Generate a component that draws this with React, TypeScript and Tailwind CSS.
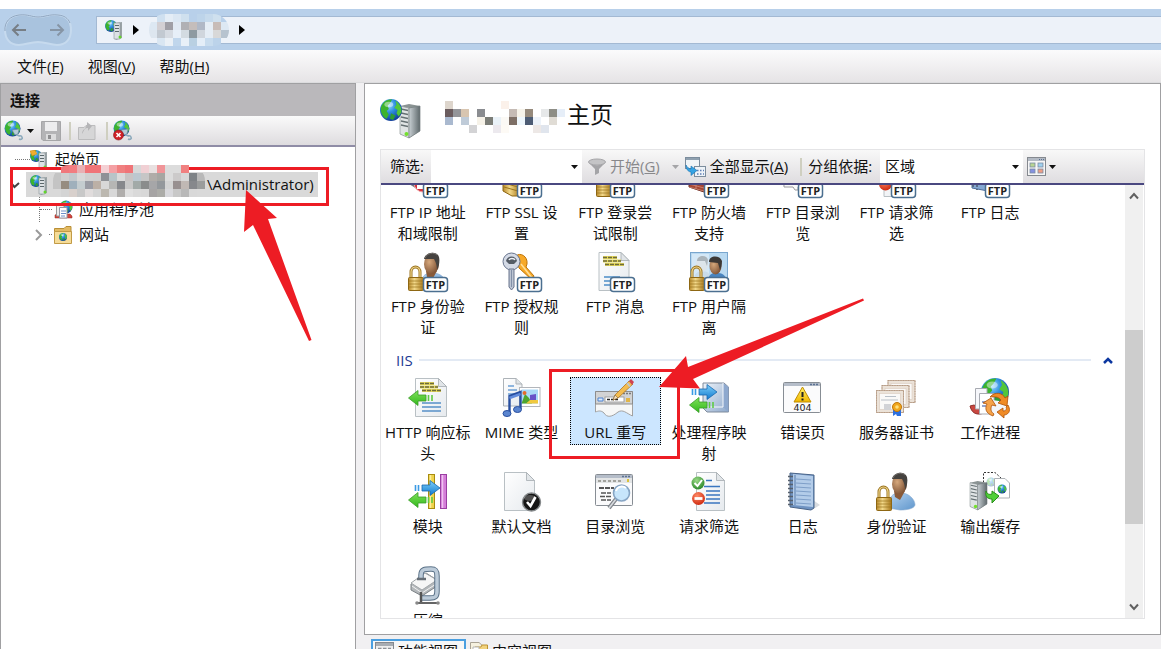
import { Fragment, type ReactNode } from "react";

// ---------- shared drawing parts ----------

function Defs() {
  return (
    <svg className="absolute h-0 w-0" aria-hidden="true">
      <defs>
        <radialGradient id="globe" cx="0.38" cy="0.28" r="0.8">
          <stop offset="0" stopColor="#9fe0ff" />
          <stop offset="0.4" stopColor="#2f8fe0" />
          <stop offset="1" stopColor="#0b2f8c" />
        </radialGradient>
        <linearGradient id="gold" x1="0" x2="1">
          <stop offset="0" stopColor="#b98a2b" />
          <stop offset="0.4" stopColor="#f3d98a" />
          <stop offset="1" stopColor="#a87719" />
        </linearGradient>
        <linearGradient id="paper" x1="0" x2="1" y1="0" y2="1">
          <stop offset="0" stopColor="#ffffff" />
          <stop offset="1" stopColor="#e6eaee" />
        </linearGradient>
        <linearGradient id="steel" x1="0" x2="1">
          <stop offset="0" stopColor="#c9d0d4" />
          <stop offset="1" stopColor="#5f696c" />
        </linearGradient>
        <linearGradient id="blueArrow" x1="0" x2="0" y1="0" y2="1">
          <stop offset="0" stopColor="#7fd0fa" />
          <stop offset="1" stopColor="#1079cf" />
        </linearGradient>
        <linearGradient id="greenArrow" x1="0" x2="0" y1="0" y2="1">
          <stop offset="0" stopColor="#7fe05a" />
          <stop offset="1" stopColor="#32b81c" />
        </linearGradient>
        <radialGradient id="skin" cx="0.35" cy="0.4" r="0.8">
          <stop offset="0" stopColor="#d6a77b" />
          <stop offset="1" stopColor="#6b4026" />
        </radialGradient>
        <linearGradient id="shirt" x1="0" x2="1" y1="0" y2="1">
          <stop offset="0" stopColor="#b5d3f0" />
          <stop offset="1" stopColor="#5f96cc" />
        </linearGradient>
        <linearGradient id="cube" x1="0" x2="1" y1="0" y2="1">
          <stop offset="0" stopColor="#eef3f9" />
          <stop offset="1" stopColor="#8ea9cc" />
        </linearGradient>
        <linearGradient id="warn" x1="0" x2="0" y1="0" y2="1">
          <stop offset="0" stopColor="#fff26b" />
          <stop offset="1" stopColor="#f2b800" />
        </linearGradient>
        <radialGradient id="redBall" cx="0.4" cy="0.3" r="0.8">
          <stop offset="0" stopColor="#ff8a66" />
          <stop offset="1" stopColor="#c81e06" />
        </radialGradient>
        <radialGradient id="greenBall" cx="0.4" cy="0.3" r="0.8">
          <stop offset="0" stopColor="#9ad986" />
          <stop offset="1" stopColor="#1f7f1f" />
        </radialGradient>
      </defs>
    </svg>
  );
}

function Globe({ x, y, r }: { x: number; y: number; r: number }) {
  return (
    <g transform={`translate(${x} ${y}) scale(${r / 10})`}>
      <circle r="10" fill="url(#globe)" />
      <path d="M-9 -3C-7 -8 -3 -10 1 -9.500L-1 -6L-3 -4L-2 -1L-4 1L-2 4L-4 8C-8 6 -10 1 -9 -3Z" fill="#3cb32e" />
      <path d="M4 -8.500C8 -6 10 -2 9.500 2L7 6L5 3L6 0L3 -2L5 -5Z" fill="#52c63a" />
      <path d="M0 3L4 5L2 9L-1 8Z" fill="#2f9c35" />
      <ellipse cx="-2" cy="-5" rx="4" ry="2.500" fill="#fff" opacity="0.45" />
    </g>
  );
}

function Page({ x = 7, w = 32, h = 38 }: { x?: number; w?: number; h?: number }) {
  return (
    <g transform={`translate(${x} 0.500)`}>
      <path d={`M0 0H${w - 8}L${w} 8V${h}H0Z`} fill="url(#paper)" stroke="#b9c0c4" />
      <path d={`M${w - 8} 0V8H${w}Z`} fill="#e1e5e8" stroke="#a4abb0" strokeWidth="0.800" />
    </g>
  );
}

function Lock({ x = 0, y = 14 }: { x?: number; y?: number }) {
  return (
    <g transform={`translate(${x} ${y})`}>
      <path d="M3 14V6A4.500 5 0 0 1 12 6V14" fill="none" stroke="#9b7420" strokeWidth="3" />
      <path d="M3 14V6A4.500 5 0 0 1 12 6V14" fill="none" stroke="#f0d68c" strokeWidth="1.200" />
      <rect x="0.500" y="11.500" width="15" height="13" rx="1" fill="url(#gold)" stroke="#8e6713" />
      <path d="M1 15H15M1 18H15M1 21H15" stroke="#9a731d" strokeWidth="0.700" />
    </g>
  );
}

function Person() {
  return (
    <g>
      <path d="M13 36C12 25 17 21 23 21C32 20 39 27 39 33C38 37 30 38 24 38Z" fill="url(#shirt)" stroke="#7fa5cc" strokeWidth="0.600" />
      <path d="M18 19L19 25L24 28L29 19Z" fill="#8a5a38" />
      <ellipse cx="23.500" cy="12" rx="7.500" ry="10" fill="url(#skin)" />
      <path d="M16 7C17 0 29 -2 31 5C32 9 31 14 29 18C29 12 27 9 26 7Z" fill="#45423f" />
      <path d="M17 6C19 1 26 0 29 3" stroke="#77736f" fill="none" />
    </g>
  );
}

function Ftp() {
  return (
    <g>
      <rect x="15.500" y="25.500" width="24" height="14" rx="3" fill="#fff" stroke="#4b6f90" strokeWidth="1.500" />
      <text x="27.500" y="36.500" textAnchor="middle" fontSize="11" fontWeight="700" fontFamily="'Open Sans', sans-serif" fill="#222">
        FTP
      </text>
    </g>
  );
}

function RightArrow({ x, y }: { x: number; y: number }) {
  return (
    <g transform={`translate(${x} ${y})`} fill="url(#blueArrow)" stroke="#1668b0" strokeWidth="0.800">
      <path d="M7 5H15V0.500L25 8L15 15.500V11H7Z" />
      <path d="M0.500 5V11M3.500 5V11" strokeWidth="1.600" stroke="#3a9ae4" />
    </g>
  );
}

function LeftArrow({ x, y }: { x: number; y: number }) {
  return (
    <g transform={`translate(${x} ${y})`} fill="url(#greenArrow)" stroke="#3a9c28" strokeWidth="0.800">
      <path d="M18 5H10V0.500L0.500 8L10 15.500V11H18Z" />
      <path d="M20.500 5V11M24 5V11" strokeWidth="1.600" stroke="#5fcb45" />
    </g>
  );
}

function Tower({ x, y, s = 1 }: { x: number; y: number; s?: number }) {
  return (
    <g transform={`translate(${x} ${y}) scale(${s})`}>
      <path d="M0 2L9 0L20 2V27L9 34L0 30Z" fill="#8a9393" />
      <path d="M0 2L9 4V34L0 30Z" fill="#dfe3e4" stroke="#90989a" strokeWidth="0.700" />
      <path d="M9 4L20 2V27L9 34Z" fill="url(#steel)" stroke="#737c7e" strokeWidth="0.700" />
      <path d="M1 5L8 6.500M1 9L8 10.500M1 13L8 14.500M1 17L8 18.500M1 21L8 22.500" stroke="#657073" strokeWidth="1.300" />
      <circle cx="6.500" cy="30" r="2" fill="#73e02c" />
    </g>
  );
}

function YellowLines({ x = 11 }: { x?: number }) {
  return (
    <g>
      <path d={`M${x} 5.500H${x + 14}M${x} 9H${x + 18}M${x + 2} 12.500H${x + 21}`} stroke="#e6d95b" strokeWidth="2.800" />
      <path d={`M${x} 5.500H${x + 14}M${x} 9H${x + 18}M${x + 2} 12.500H${x + 21}`} stroke="#6d6b3c" strokeWidth="1.300" strokeDasharray="4 1" />
    </g>
  );
}

function WindowFrame({ y, h }: { y: number; h: number }) {
  return (
    <g>
      <rect x="0.500" y={y + 0.5} width="37" height={h} rx="1" fill="#fbfbfc" stroke="#878d94" />
      <rect x="1" y={y + 1} width="36" height="3" fill="#b5bdc9" />
      <path d={`M27 ${y + 2.5}H35`} stroke="#5d7395" strokeWidth="1.500" strokeDasharray="2 1" />
    </g>
  );
}

// ---------- feature icons, 40 x 40 ----------

const ICONS: Record<string, ReactNode> = {
  ftpIp: (
    <>
      <path d="M1 26L8 22L16 25V31L9 31Z" fill="#70777c" />
      <circle cx="15" cy="25" r="9" fill="#d8323c" stroke="#f0a0a4" />
      <rect x="9" y="27" width="12" height="4" fill="#fff" />
      <Ftp />
    </>
  ),
  ftpSsl: (
    <>
      <path d="M1 16H18V38L10 38L1 33Z" fill="url(#gold)" stroke="#8e6713" />
      <path d="M2 25L16 29M2 29L16 33" stroke="#9a731d" />
      <Ftp />
    </>
  ),
  ftpLogin: (
    <>
      <Lock x={1} y={14} />
      <Ftp />
    </>
  ),
  ftpFirewall: (
    <>
      <path d="M0 20L28 16V36L15 34L0 29Z" fill="#a64634" stroke="#6e2b20" />
      <path d="M0 26L15 30M7 21V31M0 29L15 33" stroke="#d99784" strokeWidth="0.700" />
      <Ftp />
    </>
  ),
  ftpBrowse: (
    <>
      <path d="M0.500 8H36V29H15V32H12L10 29H1Z" fill="#fafafa" stroke="#9a9a9e" />
      <Ftp />
    </>
  ),
  ftpFilter: (
    <>
      <Page x={8} w={28} />
      <circle cx="9.500" cy="26" r="6.500" fill="url(#redBall)" />
      <Ftp />
    </>
  ),
  ftpLog: (
    <>
      <path d="M2 2H27V35L18 33L2 30Z" fill="#85a8d2" stroke="#4f6e9b" />
      <path d="M3 3V30M7 3V32" stroke="#5b6c85" strokeDasharray="2 2" strokeWidth="2" />
      <Ftp />
    </>
  ),
  ftpAuth: (
    <>
      <Person />
      <Lock />
      <Ftp />
    </>
  ),
  ftpRules: (
    <>
      <path d="M14 4C18 0 26 4 25 12L24 15L32 24L30 28L17 16Z" fill="#f7a928" stroke="#bd7307" />
      <path d="M19 12L30 26" stroke="#ffe09a" strokeWidth="1.500" />
      <circle cx="9.500" cy="9.500" r="8.500" fill="#d4dae6" stroke="#68748d" />
      <path d="M7 17H12V35L9.500 38L7 35Z" fill="#bcc5d3" stroke="#68748d" />
      <path d="M9.500 18V35" stroke="#8290a8" />
      <path d="M4 9C5 3 14 3 15 9L12 12H7Z" fill="#545c66" />
      <path d="M7 8C8 6 12 6 13 8" stroke="#eef2f7" fill="none" strokeWidth="1.500" />
      <Ftp />
    </>
  ),
  ftpMessage: (
    <>
      <Page x={4} w={30} />
      <YellowLines x={8} />
      <path d="M9 25H25M9 29H16M9 33H16" stroke="#4c8dc8" strokeWidth="1.500" />
      <Ftp />
    </>
  ),
  ftpIsolation: (
    <>
      <rect x="1.500" y="0.500" width="37" height="34" fill="#b9d9f1" stroke="#79a6ce" />
      <rect x="3" y="2" width="17" height="30" fill="#d4e8f7" />
      <path d="M5 28C5 21 9 19 14 19C19 19 22 23 22 28Z" fill="#c9dcea" />
      <ellipse cx="13" cy="12" rx="6" ry="8" fill="#dde5ea" />
      <path d="M8 9C8 3 18 2 19 8L18 14L16 9Z" fill="#aab4bb" />
      <path d="M19 30C19 22 24 20 29 21C35 21 38 25 38 32Z" fill="#4a85c0" />
      <ellipse cx="26.500" cy="14" rx="6" ry="8.500" fill="url(#skin)" />
      <path d="M20 10C20 3 31 3 33 9C33 13 32 16 31 18L29 11Z" fill="#3d3835" />
      <Lock />
      <Ftp />
    </>
  ),
  httpHeaders: (
    <>
      <Page x={7.5} w={31} />
      <YellowLines x={12} />
      <path d="M14 25H33M14 29H33M14 33H33" stroke="#5790c8" strokeWidth="1.600" />
      <LeftArrow x={0} y={12} />
    </>
  ),
  mime: (
    <>
      <path d="M1.500 0.500H14L20 6V28H1.500Z" fill="url(#paper)" stroke="#adb3b8" />
      <path d="M14 0.500V6H20" fill="#dfe3e6" stroke="#adb3b8" />
      <path d="M6 8H12M6 12H15M6 16H14" stroke="#6da0d5" strokeWidth="1.500" />
      <rect x="17.500" y="9.500" width="20.500" height="19" fill="#fff" stroke="#b3b6bb" />
      <rect x="19.500" y="11.500" width="16.500" height="14" fill="#a9d8f7" />
      <path d="M19.500 25.500L23 16L27 20L30 25.500Z" fill="#4fa52e" />
      <path d="M28 17L34 16V22L28 23Z" fill="#6852c7" />
      <circle cx="22.500" cy="15" r="2" fill="#e66c2b" />
      <path d="M24 25.500L28 22H36V25.500Z" fill="#f1c93f" />
      <path d="M7.500 35V18L18.500 14V31" fill="none" stroke="#274e9f" strokeWidth="2.400" />
      <path d="M7.500 20L18.500 16" stroke="#638cdb" strokeWidth="2.500" />
      <ellipse cx="5" cy="35.500" rx="4" ry="3" fill="#5b85cf" stroke="#274e9f" />
      <ellipse cx="15.500" cy="31.500" rx="4" ry="3" fill="#5b85cf" stroke="#274e9f" />
    </>
  ),
  urlRewrite: (
    <>
      <path d="M0.500 13.500H37.500V38C31 35 28 31 23 34C17 39 12 40 9 35C6 32 3 33 0.500 34Z" fill="#f6f7f7" stroke="#a2a2a2" />
      <path d="M0.500 13.500H37.500V26H0.500Z" fill="#d2d3d4" stroke="#8d8d8d" />
      <path d="M28 15.500H36" stroke="#797979" strokeDasharray="2 1" strokeWidth="1.500" />
      <rect x="10" y="19" width="19" height="5" fill="#fff" stroke="#909090" strokeWidth="0.800" />
      <path d="M12 21.500H24" stroke="#222" strokeWidth="1.600" strokeDasharray="3 1" />
      <path d="M3 20H8V23H3Z" fill="#dcecff" stroke="#4f83cf" />
      <path d="M31 20H35V24H31Z" fill="#e1b548" />
      <path d="M18 22L20 17L34 3L38 6L23 20Z" fill="#f3bc4f" stroke="#a96d17" strokeWidth="0.700" />
      <path d="M18 22L20 17L23 20Z" fill="#f4dfbe" stroke="#6f5229" strokeWidth="0.500" />
      <path d="M34 3L36 1L39 4L37 7Z" fill="#cf4353" />
      <path d="M32 5L35 8.500" stroke="#bec8d0" strokeWidth="1.800" />
    </>
  ),
  handlers: (
    <>
      <path d="M14 5H35L39.500 9V34H18L14 30Z" fill="url(#cube)" stroke="#7f8b9c" />
      <path d="M34 5L39.500 9V34L34 29Z" fill="#8da8ce" />
      <path d="M14 29H34V5" fill="none" stroke="#f5f8fd" />
      <RightArrow x={3} y={6} />
      <LeftArrow x={0} y={19} />
    </>
  ),
  error404: (
    <>
      <WindowFrame y={4} h={30} />
      <path d="M19.500 9L28 24H11Z" fill="url(#warn)" stroke="#c08c00" strokeLinejoin="round" />
      <path d="M19.500 14V19M19.500 20.500V22.500" stroke="#222" strokeWidth="2" />
      <text x="19.500" y="33" fontSize="9.500" textAnchor="middle" fontFamily="'DejaVu Sans', sans-serif" fill="#222">
        404
      </text>
    </>
  ),
  certs: (
    <>
      {[
        [12, 2.5],
        [6, 7.5],
        [0.5, 12.5],
      ].map(([x, y]) => (
        <g key={x}>
          <rect x={x} y={y} width="27" height="22" fill="#ebe2d8" stroke="#c5ad99" />
          <rect x={x} y={y} width="27" height="22" fill="none" stroke="#b39b87" strokeDasharray="1 1.500" />
          <rect x={x + 3} y={y + 3} width="21" height="16" fill="#faf9f8" stroke="#d9cabd" strokeWidth="0.600" />
        </g>
      ))}
      <path d="M9 18.500H20M5 22H22" stroke="#b9c0c8" />
      <rect x="8" y="26" width="7" height="6" fill="#d2d3d7" />
      <path d="M17 31V38L20 36L21 38L25 38V31Z" fill="#2c70e0" />
      <circle cx="21" cy="29" r="4.500" fill="#f0a61d" stroke="#c17609" />
      <circle cx="21" cy="29" r="1.800" fill="#ffe07d" />
    </>
  ),
  worker: (
    <>
      <Globe x={25} y={14} r={14} />
      <path d="M0 28C2 37 9 37 14 35L10 30L4 27Z" fill="#c94740" stroke="#8f302b" />
      <path d="M5.500 10.500H17V31H5.500Z" fill="#f6f7fb" stroke="#a7aab1" />
      <path d="M9.500 15.500H24V36H9.500Z" fill="#fff" stroke="#a7aab1" />
      <path d="M22 22L36 24L35 36H20Z" fill="#f4f6fa" />
      <path d="M12 24H19M12 28H16" stroke="#7286bd" strokeWidth="1.500" />
      <path d="M20 19C25 13 33 15 35 20L38 18L37 28L28 25L31 22C28 18 24 19 20 19Z" fill="#f08b26" stroke="#ad5107" strokeWidth="0.800" />
      <path d="M38 27C42 34 37 37 34 37V40L27 34L33 30V33C36 33 37 31 36 29Z" fill="#f08b26" stroke="#ad5107" strokeWidth="0.800" />
      <path d="M23 38C15 35 15 30 17 26L13 25L21 20L26 28L22 27C20 31 21 34 24 36Z" fill="#f5a34a" stroke="#ad5107" strokeWidth="0.800" />
    </>
  ),
  modules: (
    <>
      <rect x="20.500" y="2.500" width="6" height="34" fill="#efd24a" stroke="#a88c10" />
      <rect x="32.500" y="2.500" width="6" height="34" fill="#d47ed8" stroke="#9a3fa2" />
      <path d="M34.500 3V36" stroke="#f0c3f2" strokeWidth="1.500" />
      <path d="M22.500 3V36" stroke="#fbec9b" strokeWidth="1.500" />
      <RightArrow x={7} y={8} />
      <LeftArrow x={0} y={20} />
    </>
  ),
  defaultDoc: (
    <>
      <Page x={2.5} w={30} />
      <circle cx="29.500" cy="30" r="9" fill="#151515" stroke="#85898b" strokeWidth="1.400" />
      <ellipse cx="28" cy="26" rx="6" ry="3" fill="#fff" opacity="0.250" />
      <path d="M25 30L28.500 34L33.500 25" fill="none" stroke="#fff" strokeWidth="2.600" />
    </>
  ),
  dirBrowse: (
    <>
      <WindowFrame y={2} h={31} />
      <rect x="1" y="6" width="36" height="5" fill="#e3e5e6" />
      <path d="M3 9H26" stroke="#a2a29d" strokeWidth="2" strokeDasharray="3 2" />
      <path d="M33 7V10" stroke="#d9c33a" strokeWidth="2" />
      <path d="M4 16H19" stroke="#222" strokeWidth="1.500" strokeDasharray="5 1" />
      <path d="M6 21H16M5 24.500H16M6 28H16" stroke="#555" strokeWidth="1.500" strokeDasharray="5 1" />
      <path d="M21 27L14 36" stroke="#80858b" strokeWidth="4" />
      <path d="M21 27L14 36" stroke="#d8dce0" strokeWidth="1.500" />
      <circle cx="26.500" cy="21" r="8" fill="#c7e5fb" stroke="#87a5c4" strokeWidth="1.600" />
      <path d="M21 19C22 15 27 13 31 16" stroke="#fff" strokeWidth="2" fill="none" />
    </>
  ),
  requestFilter: (
    <>
      <Page x={7.5} w={28} />
      <path d="M17 8.500H23M15 14.500H31M17 19H31M17 23H31M17 27H31M15 31H31" stroke="#3a76c0" strokeWidth="1.500" />
      <circle cx="9" cy="11" r="6.500" fill="url(#greenBall)" />
      <path d="M5.500 11L8.500 14L13 8" fill="none" stroke="#fff" strokeWidth="2" />
      <circle cx="9.500" cy="26.500" r="6.500" fill="url(#redBall)" />
      <path d="M5.500 26.500H13.500" stroke="#fff" strokeWidth="2.800" />
    </>
  ),
  log: (
    <>
      <path d="M30 28L37 33L29 38Z" fill="#d9dce0" />
      <path d="M7 1L31 3V36L28 38L7 35Z" fill="#6f93c2" stroke="#496489" />
      <path d="M10 2L30 4V35L10 33Z" fill="#b3cce9" />
      <path d="M13 7L28 8M13 11L28 12M13 15L28 16M13 19L28 20M13 23L28 24M13 27L28 28M13 31L28 32" stroke="#7e9fc8" />
      <path d="M12 3V33" stroke="#587dab" />
      <path d="M5 4.500H10M5 8.500H10M5 12.500H10M5 16.500H10M5 20.500H10M5 24.500H10M5 28.500H10M5 32.500H10" stroke="#57616d" strokeWidth="1.500" />
    </>
  ),
  auth: (
    <>
      <Person />
      <Lock x={0} y={14} />
    </>
  ),
  outputCache: (
    <>
      <path d="M13.500 28V0.500H25L31 6V10" fill="#fff" stroke="#333" strokeDasharray="2 1.500" />
      <g opacity="0.350">
        <Globe x={21} y={10} r={4.500} />
      </g>
      <Tower x={0} y={9} s={0.85} />
      <path d="M24.500 6.500H35L39.500 11V26H24.500Z" fill="#fff" stroke="#adb1b5" />
      <Globe x={32} y={17} r={4.500} />
      <path d="M16 19C17 22 19 23 22 22V19L29 24L22 31V27C17 27 15 24 16 19Z" fill="#4fcf38" stroke="#2a8e1b" />
    </>
  ),
  compress: (
    <>
      <path d="M3 18L18 7L29 14V20L14 30L3 24Z" fill="#b4b8bb" stroke="#7c8286" />
      <path d="M3 17L17 7L29 14L14 24Z" fill="#f6f6f6" stroke="#a1a6a9" />
      <path d="M4 20L14 27L28 18" fill="none" stroke="#f2f2f2" />
      <path d="M13 13V9C13 3 17 3 23 3C28 3 29 5 29 10V25C29 31 27 32 22 32H13" fill="none" stroke="#5b7288" strokeWidth="5.500" />
      <path d="M13 13V9C13 3 17 3 23 3C28 3 29 5 29 10V25C29 31 27 32 22 32H13" fill="none" stroke="#bccbd9" strokeWidth="3.500" />
      <path d="M9 13H18" stroke="#666e76" strokeWidth="2.500" />
      <path d="M13 26V38" stroke="#555" strokeWidth="2.500" />
      <path d="M9 37H30" stroke="#656565" strokeWidth="2" />
      <circle cx="9" cy="37" r="1.800" fill="#888" />
      <circle cx="30" cy="37" r="1.800" fill="#888" />
    </>
  ),
};

type Feature = { icon: string; label: string; selected?: boolean };

const FTP_FEATURES: Feature[] = [
  { icon: "ftpIp", label: "FTP IP 地址\n和域限制" },
  { icon: "ftpSsl", label: "FTP SSL 设\n置" },
  { icon: "ftpLogin", label: "FTP 登录尝\n试限制" },
  { icon: "ftpFirewall", label: "FTP 防火墙\n支持" },
  { icon: "ftpBrowse", label: "FTP 目录浏\n览" },
  { icon: "ftpFilter", label: "FTP 请求筛\n选" },
  { icon: "ftpLog", label: "FTP 日志" },
  { icon: "ftpAuth", label: "FTP 身份验\n证" },
  { icon: "ftpRules", label: "FTP 授权规\n则" },
  { icon: "ftpMessage", label: "FTP 消息" },
  { icon: "ftpIsolation", label: "FTP 用户隔\n离" },
];

const IIS_FEATURES: Feature[] = [
  { icon: "httpHeaders", label: "HTTP 响应标\n头" },
  { icon: "mime", label: "MIME 类型" },
  { icon: "urlRewrite", label: "URL 重写", selected: true },
  { icon: "handlers", label: "处理程序映\n射" },
  { icon: "error404", label: "错误页" },
  { icon: "certs", label: "服务器证书" },
  { icon: "worker", label: "工作进程" },
  { icon: "modules", label: "模块" },
  { icon: "defaultDoc", label: "默认文档" },
  { icon: "dirBrowse", label: "目录浏览" },
  { icon: "requestFilter", label: "请求筛选" },
  { icon: "log", label: "日志" },
  { icon: "auth", label: "身份验证" },
  { icon: "outputCache", label: "输出缓存" },
  { icon: "compress", label: "压缩" },
];

function FeatureGrid({ items }: { items: Feature[] }) {
  return (
    <div className="grid w-[656px] auto-rows-[94px] grid-cols-7 justify-items-center">
      {items.map((f) => (
        <div key={f.label} className="pt-[3px]">
          <button
            type="button"
            className={
              f.selected
                ? "flex w-[91px] flex-col items-center gap-1 border border-dotted border-black bg-[#cce6ff] pb-px"
                : "flex w-[91px] flex-col items-center gap-1 border border-transparent pb-px"
            }
          >
            <svg viewBox="0 0 40 40" className="h-10 w-10 overflow-visible" aria-hidden="true">
              {ICONS[f.icon]}
            </svg>
            <span className="whitespace-pre leading-[21px]">{f.label}</span>
          </button>
        </div>
      ))}
    </div>
  );
}

// ---------- pixelated name patches ----------

const ADDRESS_ROWS = [
  "- cfe0f0 e4edf6 dbe7f3 cfe0ee b8d0ea bdd4ea c6daec cfe0ee b8d0ea -",
  "dde8f3 d3d0d4 a09fa6 e1e9f3 b0b0b4 c4bdbb b0b8c6 e5edf5 c8bcb7 dde8f3",
  "dde6ef c2c9d1 d6dbe2 e7eff8 d3dbe1 8e9aa1 d0d6dd e5edf5 d8d8d8 b7c3cf",
  "- d9e6f2 eaf0f6 c0d6ec e8f0f8 b9d0e2 e4eef8 c8dcee bcd3ea -",
];

const ACCOUNT_ROWS = [
  "- f0787c f27c80 e8b0b4 f07478 f07478 f4d0d4 f4a0a4 f08080 f07478 d8d8d8 f0d0d4 e8e0e0 f09498 dcdcdc dcdcdc f08080 - -",
  "c4c4c4 cfcfcf c3c8cc d8d8d8 d0d0d0 cfcfcf 8e9196 b8c4c8 dadada c8c4c4 bcc8d0 c6c6c6 b0aca8 a6a6a2 dcdcdc cccaca d8d8d8 7e8286 b8b8b8",
  "c4c4c4 968c80 a0b0bc c4cccf 9a9ca4 bcb0a6 d8d8d8 b6b6b4 86888c c8c8c8 a2aaa8 8a8c8c a6a6a8 94989c d4d4d4 989090 c0b8b4 86888c 9a9c9c",
  "- d4d4d4 d8d0cc c8c8c8 e0dcdc d4d4d4 bcb8b0 d8d8d8 b0aeac e0e0e0 dadada d8d8d8 a6a4a4 acaca8 d8d8dc c8c8c8 b8b8b8 d8d8d8 -",
  "-",
];

const TITLE_ROWS = [
  "ddd5cc - - - - - - fbf1ea",
  "6b5c5e 949599 d8c5b0 - 8a8c90 - - - c5bbb5 f6f3ea 968a7c - e6e8e9 8e8e86 e6eef8",
  "aab9cf - bfcbd8 - f6f2e8 7b7d77 eaf2f8 fbf9f5 7d6f66 eef7fd 4d5c74 edf3fa - e0dcd5",
  "- - - d3d3d5 - - ece9ee fdfaf5 - - - ede8e6 e0e5ed",
];

function Mosaic({ rows, cols, className }: { rows: string[]; cols: number; className: string }) {
  return (
    <svg width={cols * 8} height={rows.length * 8} className={className} shapeRendering="crispEdges" aria-hidden="true">
      {rows.map((row, r) => (
        <Fragment key={r}>
          {row.split(" ").map((c, i) =>
            c === "-" ? null : <rect key={i} x={i * 8} y={r * 8} width="8" height="8" fill={`#${c}`} />,
          )}
        </Fragment>
      ))}
    </svg>
  );
}

// ---------- small glyphs ----------

function Caret({ className = "" }: { className?: string }) {
  return (
    <svg viewBox="0 0 7 4" className={`h-1 w-[7px] shrink-0 ${className}`} aria-hidden="true">
      <path d="M0 0H7L3.500 4Z" fill="currentColor" />
    </svg>
  );
}

function CrumbArrow() {
  return (
    <svg viewBox="0 0 6 10" className="h-[10px] w-[6px] shrink-0" aria-hidden="true">
      <path d="M0 0L6 5L0 10Z" fill="#000" />
    </svg>
  );
}

function ServerIcon({ home = false }: { home?: boolean }) {
  return (
    <svg viewBox="0 0 18 20" className="h-5 w-[18px] shrink-0" aria-hidden="true">
      <Globe x={6} y={6} r={6} />
      {home && <path d="M0 1L5 0L7 4L2 6Z" fill="#efae2e" stroke="#c27c10" strokeWidth="0.500" />}
      <path d="M9 3L17 2V18L11 20L9 18Z" fill="#9aa3a6" />
      <path d="M9 3H15V19H9Z" fill="#dde2e5" stroke="#8c9598" strokeWidth="0.600" />
      <path d="M10 5.500H14M10 8.500H14M10 11.500H14" stroke="#5b686c" />
      <circle cx="15" cy="17" r="1.500" fill="#62d62a" />
    </svg>
  );
}

function PlugGlobe({ removed = false }: { removed?: boolean }) {
  return (
    <svg viewBox="0 0 21 21" className="h-[21px] w-[21px] shrink-0" aria-hidden="true">
      <Globe x={8.5} y={8.5} r={8} />
      <path d="M8 10L15 9L14 14L11 15Z" fill="#b5cbd8" stroke="#6c8ba1" strokeWidth="0.700" />
      <path d="M13 14C14 18 17 14 18 17C19 19 17 20 15 19" fill="none" stroke="#8ba9bb" strokeWidth="1.600" />
      {removed && (
        <>
          <circle cx="5.500" cy="15" r="5" fill="#cf2027" stroke="#8b171c" strokeWidth="0.600" />
          <path d="M3.500 13L7.500 17M7.500 13L3.500 17" stroke="#fff" strokeWidth="1.600" />
        </>
      )}
    </svg>
  );
}

function Separator() {
  return <span className="h-[18px] w-0.5 shrink-0 bg-[#cfcfc0]" />;
}

function NavButtons() {
  return (
    <div className="relative flex h-8 w-[68px] shrink-0 items-center justify-between px-[7px]">
      <svg viewBox="0 0 68 32" className="absolute inset-0 h-8 w-[68px]" aria-hidden="true">
        <path
          d="M15 1C24 0 28 3 34 3C41 3 45 0 54 1C64 2 67 9 67 16C67 25 62 31 53 31C46 31 42 28 34 28C26 28 22 31 15 31C6 31 1 25 1 16C1 8 6 2 15 1Z"
          fill="#a9c3de"
          stroke="#c6daee"
          strokeWidth="2"
        />
        <path d="M1 17C0 8 6 2 15 1C24 0 28 3 34 3C41 3 45 0 54 1C60 1.500 64 4 66 9" fill="none" stroke="#8ea5c0" />
      </svg>
      <button type="button" aria-label="后退" className="relative">
        <svg viewBox="0 0 16 14" className="h-[14px] w-4" fill="none" stroke="#777e85" strokeWidth="2">
          <path d="M15 7H2M7.500 1.500L2 7L7.500 12.500" />
        </svg>
      </button>
      <button type="button" aria-label="前进" className="relative">
        <svg viewBox="0 0 16 14" className="h-[14px] w-4" fill="none" stroke="#8695a5" strokeWidth="2">
          <path d="M1 7H14M8.500 1.500L14 7L8.500 12.500" />
        </svg>
      </button>
    </div>
  );
}

const MENUS = [
  ["文件", "F"],
  ["视图", "V"],
  ["帮助", "H"],
];

function Connections() {
  return (
    <aside className="flex w-[356px] shrink-0 flex-col border border-b-0 border-[#a0a0a2] bg-white">
      <h2 className="flex h-8 shrink-0 items-center bg-[#bab8bb] px-[9px] font-bold">连接</h2>
      <div className="flex h-[31px] shrink-0 items-center border-b-2 border-[#8f8ca6] bg-linear-to-b from-[#fafafa] to-[#dedcdf] pl-[3px]">
        <button type="button" aria-label="连接到服务器" className="flex items-center gap-0.5">
          <PlugGlobe />
          <Caret />
        </button>
        <button type="button" aria-label="保存连接" disabled className="ml-[7px]">
          <svg viewBox="0 0 20 20" className="h-5 w-5">
            <path d="M0.500 0.500H19.500V19.500H2L0.500 18Z" fill="#b4b4b6" stroke="#a6a6a8" />
            <rect x="4" y="1" width="12" height="9" fill="#ededee" />
            <rect x="5" y="13" width="10" height="6" fill="#dcdcdd" />
            <rect x="7" y="14" width="3" height="4" fill="#8f8f91" />
          </svg>
        </button>
        <span className="ml-2 flex items-center gap-[7px]">
          <Separator />
          <button type="button" aria-label="上移" disabled>
            <svg viewBox="0 0 18 18" className="h-[18px] w-[18px]">
              <path d="M0.500 5.500H6L8 3.500H17V17.500H0.500Z" fill="#d6d6d7" stroke="#bcbcbd" />
              <path d="M4 12C4 8 7 6 10 6V9L14 4L9 0V3" fill="#b5b5b7" />
            </svg>
          </button>
        </span>
        <span className="ml-[10px] flex items-center gap-[5px]">
          <Separator />
          <button type="button" aria-label="删除连接">
            <PlugGlobe removed />
          </button>
        </span>
      </div>

      <ul className="flex flex-col">
        <li className="flex h-[25px] items-center pl-[14px]">
          <span className="h-px w-[15px] border-t border-dotted border-[#777]" />
          <button type="button" className="flex items-center gap-[7px]">
            <ServerIcon home />
            起始页
          </button>
        </li>
        <li className="flex h-[25px] items-center pl-[9px]">
          <svg viewBox="0 0 10 8" className="h-2 w-[10px]" aria-hidden="true">
            <path d="M1 2L4.500 6L9 2" fill="none" stroke="#444" strokeWidth="2" />
          </svg>
          <button type="button" className="ml-1.5 flex h-[25px] items-center bg-[#d9d9d9] pr-1 pl-1">
            <ServerIcon />
            <Mosaic rows={ACCOUNT_ROWS} cols={19} className="relative z-10 mr-0.5 ml-[5px] shrink-0 rounded-2xl" />
            <span>\Administrator)</span>
          </button>
        </li>
        <li className="flex h-[25px] pl-[38px]">
          <span className="h-[25px] border-l border-dotted border-[#777]" />
          <span className="mt-3 mr-0.5 h-px w-3 border-t border-dotted border-[#777]" />
          <button type="button" className="flex items-center gap-1.5">
            <svg viewBox="0 0 19 20" className="h-5 w-[19px]" aria-hidden="true">
              <Globe x={12} y={7} r={6.5} />
              <path d="M1 15L3 14H16L18 16V18H1Z" fill="#d2463e" stroke="#922d27" strokeWidth="0.500" />
              <path d="M2.500 5.500H10V16H2.500Z" fill="#eee" stroke="#999" />
              <path d="M5.500 7.500H13V18H5.500Z" fill="#fff" stroke="#9398a6" />
              <path d="M7 11H12M7 13.500H12M7 16H11" stroke="#6c8fc9" />
            </svg>
            应用程序池
          </button>
        </li>
        <li className="flex h-[25px] items-center pl-[34px]">
          <svg viewBox="0 0 8 12" className="h-3 w-2" aria-hidden="true">
            <path d="M1 1L6 6L1 11" fill="none" stroke="#9a9a9a" strokeWidth="2" />
          </svg>
          <span className="mr-0.5 ml-1.5 h-px w-[3px] border-t border-dotted border-[#777]" />
          <button type="button" className="flex items-center gap-[7px]">
            <svg viewBox="0 0 18 18" className="h-[18px] w-[18px]" aria-hidden="true">
              <path d="M0.500 2.500H10L12 0.500H17V17H0.500Z" fill="#e3ba62" stroke="#b98f36" />
              <path d="M0.500 5.500H17.500V17.500H0.500Z" fill="#f6dc98" stroke="#c29b46" />
              <Globe x={9} y={11} r={4} />
            </svg>
            网站
          </button>
        </li>
      </ul>
    </aside>
  );
}

function FilterBar() {
  return (
    <div className="flex h-[35px] shrink-0 items-center border-b-2 border-[#4a4880] bg-linear-to-b from-[#f8f8f8] to-[#dfdde0]">
      <label htmlFor="filter" className="w-[50px] shrink-0 pl-[9px] whitespace-nowrap">
        筛选:
      </label>
      <div className="flex h-full w-[151px] shrink-0 items-center bg-white pr-1">
        <input id="filter" className="h-full min-w-0 flex-1 px-1 outline-none" />
        <button type="button" aria-label="筛选历史">
          <Caret />
        </button>
      </div>
      <button type="button" disabled className="ml-1.5 flex shrink-0 items-center gap-1 text-[#88888b]">
        <svg viewBox="0 0 18 18" className="h-[18px] w-[18px]" aria-hidden="true">
          <ellipse cx="9" cy="4" rx="8.500" ry="3" fill="#c4c4c6" stroke="#a5a5a8" />
          <path d="M1 5C5 8 13 8 17 5L11 11V15L7 17V11Z" fill="#a4a4a7" />
        </svg>
        <span>
          开始(<u>G</u>)
        </span>
      </button>
      <button type="button" disabled aria-label="开始选项" className="ml-3 text-[#a5a5a8]">
        <Caret />
      </button>
      <button type="button" className="ml-1.5 flex shrink-0 items-center gap-1">
        <svg viewBox="0 0 21 20" className="h-5 w-[21px]" aria-hidden="true">
          <rect x="0.500" y="0.500" width="14" height="11" fill="#f0f4f7" stroke="#7c8d9d" />
          <path d="M1 2H14" stroke="#8fa0af" strokeWidth="2" />
          <rect x="9.500" y="9.500" width="11" height="10" fill="#eef3f8" stroke="#7c8d9d" />
          <path d="M12 13.500H19M12 17H19" stroke="#5d7fb5" strokeWidth="1.500" strokeDasharray="1.500 1.500" />
          <path d="M1 8C1 13 4 15 6 15V18.500L12 13.500L6 9V12C4 12 2 10 1 8Z" fill="#35a3e3" stroke="#1b70ae" strokeWidth="0.600" />
        </svg>
        <span>
          全部显示(<u>A</u>)
        </span>
      </button>
      <span className="ml-3 flex shrink-0 items-center gap-1.5">
        <Separator />
        <label htmlFor="group">分组依据:</label>
      </span>
      <div className="relative ml-2 flex h-full w-[143px] shrink-0 items-center bg-white">
        <select id="group" className="h-full w-full appearance-none bg-transparent pl-[5px] outline-none" defaultValue="area">
          <option value="area">区域</option>
        </select>
        <Caret className="pointer-events-none absolute right-1" />
      </div>
      <button type="button" aria-label="视图" className="ml-1 flex items-center gap-[3px]">
        <svg viewBox="0 0 19 19" className="h-[19px] w-[19px]" aria-hidden="true">
          <rect x="0.500" y="0.500" width="18" height="18" fill="#f6f6f6" stroke="#85898f" />
          <rect x="1" y="1" width="17" height="3" fill="#b3bac4" />
          <path d="M12 2.500H17" stroke="#5b7191" strokeDasharray="1 1" />
          <g stroke="#7b8aa3" strokeWidth="0.800">
            <rect x="3" y="6" width="5" height="4" fill="#b8d492" />
            <rect x="11" y="6" width="5" height="4" fill="#9fd1ee" />
            <rect x="3" y="12" width="5" height="4" fill="#8491e0" />
            <rect x="11" y="12" width="5" height="4" fill="#ee9d84" />
          </g>
        </svg>
        <Caret />
      </button>
    </div>
  );
}

function ScrollBar() {
  return (
    <div className="flex w-[18px] shrink-0 flex-col items-center justify-between bg-[#f0f0f0]">
      <svg viewBox="0 0 10 8" className="mt-[7px] h-2 w-[10px]" aria-hidden="true">
        <path d="M1 6.500L5 2L9 6.500" fill="none" stroke="#606060" strokeWidth="2" />
      </svg>
      <div className="flex w-full flex-1 flex-col">
        <span className="flex-[129]" />
        <span className="flex-[193] bg-[#cdcdcd]" />
        <span className="flex-[79]" />
      </div>
      <svg viewBox="0 0 10 8" className="mb-[7px] h-2 w-[10px]" aria-hidden="true">
        <path d="M1 1.500L5 6L9 1.500" fill="none" stroke="#606060" strokeWidth="2" />
      </svg>
    </div>
  );
}

function HomePage() {
  return (
    <section className="flex min-h-0 flex-1 flex-col border border-[#a0a0a2] bg-white px-[15px] pb-[15px]">
      <header className="flex h-[65px] shrink-0 items-center pt-1">
        <svg viewBox="0 0 42 42" className="h-[42px] w-[42px] shrink-0" aria-hidden="true">
          <Tower x={20} y={6} />
          <Globe x={11} y={12} r={11} />
        </svg>
        <Mosaic rows={TITLE_ROWS} cols={15} className="mb-[3px] ml-[23px] shrink-0" />
        <h1 className="ml-0.5 pb-[9px] text-[23px] leading-[30px]">主页</h1>
      </header>
      <div className="flex min-h-0 flex-1 flex-col border border-[#e4e4e6]">
        <FilterBar />
        <div className="flex min-h-0 flex-1 pr-px">
          <div className="min-w-0 flex-1 overflow-hidden">
            <div className="-mt-[31px]">
              <FeatureGrid items={FTP_FEATURES} />
              <div className="flex h-8 items-center gap-1.5 pt-1 pr-3 pl-[15px] text-[#1f3a93]">
                <h3>IIS</h3>
                <span className="h-0.5 flex-1 bg-[#e3eaf4]" />
                <button type="button" aria-label="折叠 IIS" className="ml-1.5">
                  <svg viewBox="0 0 10 7" className="h-[7px] w-[10px]">
                    <path d="M1 6L5 2L9 6" fill="none" stroke="#0c37a0" strokeWidth="2.500" />
                  </svg>
                </button>
              </div>
              <FeatureGrid items={IIS_FEATURES} />
            </div>
          </div>
          <ScrollBar />
        </div>
      </div>
    </section>
  );
}

function ViewTabs() {
  return (
    <nav className="flex h-[14px] shrink-0 items-start overflow-hidden pt-1 pl-[7px]">
      <button type="button" className="flex h-6 shrink-0 items-center gap-1 border-2 border-[#4a9fe0] bg-[#f7f7f7] pr-1.5 pl-0.5">
        <svg viewBox="0 0 19 18" className="h-[18px] w-[19px]" aria-hidden="true">
          <rect x="0.500" y="0.500" width="18" height="17" fill="#eee" stroke="#85898f" />
          <path d="M1 2.500H18" stroke="#a8adb3" strokeWidth="3" />
          <path d="M3 7H16M3 11H16" stroke="#8e9298" strokeWidth="2.500" strokeDasharray="3.500 1.500" />
        </svg>
        <span>功能视图</span>
      </button>
      <button type="button" className="flex h-6 shrink-0 items-center gap-1 px-1">
        <svg viewBox="0 0 18 18" className="h-[18px] w-[18px]" aria-hidden="true">
          <path d="M0.500 0.500H9L13 4V16H0.500Z" fill="#f6f1df" stroke="#aaa394" />
          <path d="M5 5H11L12 3H17.500V17H5Z" fill="#f1d27f" stroke="#bd9333" />
          <path d="M3 5H9V13H3Z" fill="#fff" stroke="#b5b5b5" />
        </svg>
        <span>内容视图</span>
      </button>
    </nav>
  );
}

// red boxes and arrows drawn over the window
function Annotations() {
  return (
    <svg className="pointer-events-none absolute inset-0 h-full w-full" aria-hidden="true">
      <g fill="none" stroke="#ed1c24" strokeWidth="3">
        <rect x="11.500" y="168.500" width="316" height="36" />
        <rect x="550.500" y="370.500" width="128" height="87" />
      </g>
      <g fill="#ed1c24">
        <path d="M246 190L277 218L268 219L311.500 340L309 341L253 225L244 232Z" />
        <path d="M659 387L686 356L688 367L863 298.500L864 300.500L693 379L700 388.500Z" />
      </g>
    </svg>
  );
}

export default function App() {
  return (
    <div className="relative flex h-screen flex-col overflow-hidden bg-[#f1f0f2] font-['Open_Sans','Noto_Sans_CJK_SC',sans-serif] text-[15px] leading-[21px] text-[#111]">
      <Defs />
      <div className="h-[9px] shrink-0 bg-white" />
      <div className="flex h-[41px] shrink-0 items-center bg-[#b8d0ea] pl-1">
        <NavButtons />
        <div className="ml-6 flex h-7 flex-1 items-center border border-r-0 border-[#a3b9d3] bg-[#edf2f9] pl-2">
          <ServerIcon />
          <span className="ml-2.5 flex items-center gap-[10px]">
            <CrumbArrow />
            <Mosaic rows={ADDRESS_ROWS} cols={10} className="rounded-2xl" />
            <CrumbArrow />
          </span>
        </div>
      </div>
      <nav className="flex h-[33px] shrink-0 items-center gap-6 border-b border-[#dcdcde] bg-linear-to-b from-[#fbfbfc] to-[#e6e4e6] pl-[17px]">
        {MENUS.map(([name, key]) => (
          <button key={key} type="button">
            {name}(<u>{key}</u>)
          </button>
        ))}
      </nav>
      <main className="flex min-h-0 flex-1">
        <Connections />
        <div className="ml-2 flex min-w-0 flex-1 flex-col">
          <HomePage />
          <ViewTabs />
        </div>
      </main>
      <Annotations />
    </div>
  );
}
